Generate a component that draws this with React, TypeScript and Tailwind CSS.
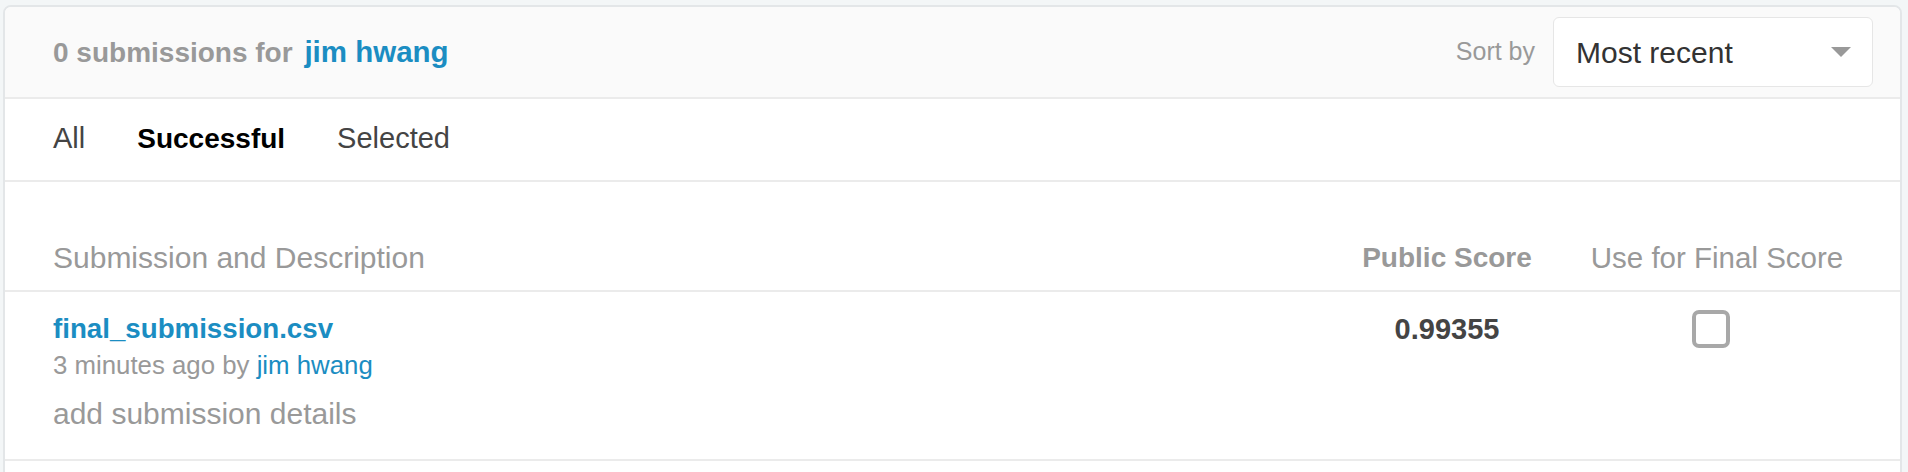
export default function App() {
  return (
    <div className="h-[472px] overflow-hidden bg-[#f3f6f7] pl-[3px] pr-[6px] pt-[5px] font-['Liberation_Sans',Arial,sans-serif]">
      <div className="rounded-[8px] border-2 border-[#e3e6e8] bg-white">
        {/* header: count + sort */}
        <div className="flex h-[92px] items-center justify-between rounded-t-[6px] border-b-2 border-[#ebebeb] bg-[#fafafa] pl-[48px] pr-[27px]">
          <h2 className="text-[28px] font-bold leading-none text-[#999]">
            0 submissions for <a className="ml-[4px] text-[29.5px] text-[#1b8dc2]">jim hwang</a>
          </h2>
          <div className="flex items-center gap-[18px]">
            <span className="text-[25px] text-[#999]">Sort by</span>
            <div className="flex h-[70px] w-[320px] items-center justify-between rounded-[6px] border border-[#e6e6e6] bg-white pl-[22px] pr-[21px]">
              <span className="text-[30px] text-[#333]">Most recent</span>
              <svg width="20" height="10" viewBox="0 0 20 10">
                <path d="M0 0h20L10 10z" fill="#999" />
              </svg>
            </div>
          </div>
        </div>

        {/* tabs */}
        <div className="flex h-[83px] items-center gap-[52px] border-b-2 border-[#ebebeb] pb-[1px] pl-[48px] text-[29px]">
          <span className="text-[#444]">All</span>
          <span className="text-[28px] font-bold text-black">Successful</span>
          <span className="text-[#444]">Selected</span>
        </div>

        {/* table head */}
        <div className="flex h-[110px] items-end border-b-2 border-[#ebebeb] pb-[14px] pl-[48px] pr-[38px] leading-[36px]">
          <div className="flex-1 text-[30px] text-[#999]">Submission and Description</div>
          <div className="w-[250px] text-center text-[28px] font-bold text-[#999]">Public Score</div>
          <div className="w-[290px] text-center text-[29.5px] text-[#999]">Use for Final Score</div>
        </div>

        {/* row */}
        <div className="flex border-b-2 border-[#ebebeb] pb-[27px] pl-[48px] pr-[38px] pt-[19px]">
          <div className="flex-1">
            <div className="text-[27.7px] font-bold leading-[36px] text-[#1b8dc2]">final_submission.csv</div>
            <div className="mt-[2px] text-[25.8px] leading-[32px] text-[#999]">
              3 minutes ago by <a className="text-[#1b8dc2]">jim hwang</a>
            </div>
            <div className="mt-[15px] text-[30px] leading-[36px] text-[#999]">add submission details</div>
          </div>
          <div className="w-[250px] text-center text-[29px] font-bold leading-[36px] text-[#444]">0.99355</div>
          <div className="flex w-[290px] justify-center pr-[12px]">
            <div className="-mt-[1px] h-[38px] w-[38px] rounded-[7px] border-4 border-[#a8a8a8]" />
          </div>
        </div>

        <div className="h-[60px]" />
      </div>
    </div>
  );
}
